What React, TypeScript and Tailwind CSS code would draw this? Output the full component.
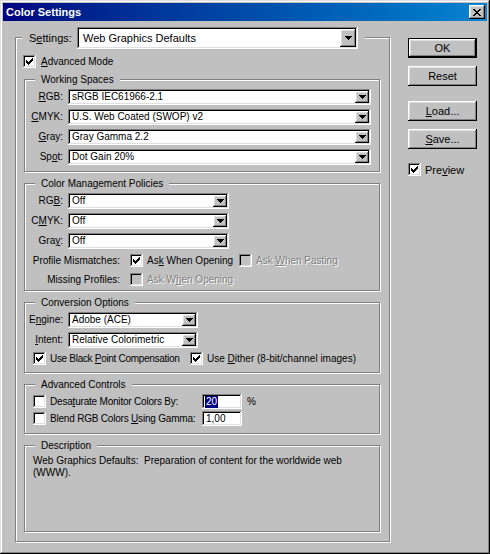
import type { ReactNode } from "react";

// classic 3D bevels
const raised =
  "shadow-[inset_-1px_-1px_#000,inset_1px_1px_#fff,inset_-2px_-2px_#808080,inset_2px_2px_#dfdfdf]";
const sunken =
  "shadow-[inset_-1px_-1px_#fff,inset_1px_1px_#808080,inset_-2px_-2px_#dfdfdf,inset_2px_2px_#000]";
const etched = "border border-[#808080] shadow-[inset_1px_1px_#fff,1px_1px_#fff]";
const dim = "text-[#808080] [text-shadow:1px_1px_0_#fff]";

function Tick() {
  return (
    <svg width="7" height="7" viewBox="0 0 7 7" shapeRendering="crispEdges">
      {[2, 3, 4, 3, 2, 1, 0].map((y, x) => (
        <rect key={x} x={x} y={y} width="1" height="3" fill="#000" />
      ))}
    </svg>
  );
}

function Arrow() {
  return (
    <svg width="7" height="4" viewBox="0 0 7 4" shapeRendering="crispEdges">
      <path d="M0 0h7v1H0zM1 1h5v1H1zM2 2h3v1H2zM3 3h1v1H3z" fill="#000" />
    </svg>
  );
}

function CloseGlyph() {
  return (
    <svg width="8" height="7" viewBox="0 0 8 7" shapeRendering="crispEdges">
      <path
        d="M0 0h2v1H0zM6 0h2v1H6zM1 1h2v1H1zM5 1h2v1H5zM2 2h4v1H2zM3 3h2v1H3zM2 4h4v1H2zM1 5h2v1H1zM5 5h2v1H5zM0 6h2v1H0zM6 6h2v1H6z"
        fill="#000"
      />
    </svg>
  );
}

function Check({ on, off }: { on?: boolean; off?: boolean }) {
  return (
    <span
      className={`flex h-[13px] w-[13px] shrink-0 items-center justify-center ${sunken} ${
        off ? "bg-[#c0c0c0]" : "bg-white"
      }`}
    >
      {on && <Tick />}
    </span>
  );
}

function Select({ value, className }: { value: string; className: string }) {
  return (
    <div className={`flex h-[16px] bg-white p-[2px] ${sunken} ${className}`}>
      <span className="flex-1 truncate pl-[2px] leading-[12px]">{value}</span>
      <span className={`flex w-[14px] items-center justify-center bg-[#c0c0c0] ${raised}`}>
        <Arrow />
      </span>
    </div>
  );
}

function Group({ title, className, children }: { title: string; className: string; children: ReactNode }) {
  return (
    <div className={`flex w-[356px] shrink-0 flex-col ${etched} ${className}`}>
      <div className="-mt-[6px] ml-[10px] w-fit bg-[#c0c0c0] px-[6px] leading-[12px]">{title}</div>
      {children}
    </div>
  );
}

function Btn({ children, main }: { children: ReactNode; main?: boolean }) {
  return (
    <div className={`h-[20px] w-[69px] ${main ? "border border-black" : ""}`}>
      <div className={`flex h-full w-full items-center justify-center bg-[#c0c0c0] ${raised}`}>{children}</div>
    </div>
  );
}

export default function App() {
  return (
    <div className="flex h-[554px] w-[490px] flex-col bg-[#c0c0c0] p-[3px] font-['Liberation_Sans',Arial,sans-serif] text-black shadow-[inset_-1px_-1px_#000,inset_1px_1px_#dfdfdf,inset_-2px_-2px_#808080,inset_2px_2px_#fff]">
      {/* title bar */}
      <div className="flex h-[18px] shrink-0 items-center justify-between bg-linear-to-r from-[#000080] to-[#1084d0] pl-[3px] pr-[2px]">
        <span className="text-[11px] font-bold leading-none text-white">Color Settings</span>
        <span className={`flex h-[14px] w-[16px] items-center justify-center bg-[#c0c0c0] ${raised}`}>
          <CloseGlyph />
        </span>
      </div>

      <div className="flex whitespace-nowrap pl-[12px] pt-[16px] text-[10px] leading-[12px]">
        {/* settings frame */}
        <div className={`flex h-[505px] w-[375px] shrink-0 flex-col pl-[8px] ${etched}`}>
          <div className="-mt-[11px] -ml-[2px] flex w-fit items-center bg-[#c0c0c0] px-[7px] text-[11px]">
            <span className="w-[44px]">
              S<span className="underline">e</span>ttings:
            </span>
            <div className={`ml-[4px] flex h-[22px] w-[281px] bg-white p-[2px] ${sunken}`}>
              <span className="flex flex-1 items-center pl-[4px]">Web Graphics Defaults</span>
              <span className={`flex w-[16px] items-center justify-center bg-[#c0c0c0] ${raised}`}>
                <Arrow />
              </span>
            </div>
          </div>

          <label className="mt-[6px] ml-[-1px] flex items-center gap-[5px]">
            <Check on />
            <span>
              <span className="underline">A</span>dvanced Mode
            </span>
          </label>

          <div className="mt-[11px] flex flex-col gap-[11px]">
            <Group title="Working Spaces" className="h-[93px]">
              <div className="mt-[3px] grid grid-cols-[38px_303px] items-center gap-x-[5px] gap-y-[4px]">
                <span className="text-right">
                  <span className="underline">R</span>GB:
                </span>
                <Select value="sRGB IEC61966-2.1" className="w-[303px]" />
                <span className="text-right">
                  <span className="underline">C</span>MYK:
                </span>
                <Select value="U.S. Web Coated (SWOP) v2" className="w-[303px]" />
                <span className="text-right">
                  <span className="underline">G</span>ray:
                </span>
                <Select value="Gray Gamma 2.2" className="w-[303px]" />
                <span className="text-right">
                  Sp<span className="underline">o</span>t:
                </span>
                <Select value="Dot Gain 20%" className="w-[303px]" />
              </div>
            </Group>

            <Group title="Color Management Policies" className="h-[108px]">
              <div className="mt-[3px] grid grid-cols-[38px_161px] items-center gap-x-[5px] gap-y-[4px]">
                <span className="text-right">
                  RG<span className="underline">B</span>:
                </span>
                <Select value="Off" className="w-[161px]" />
                <span className="text-right">
                  C<span className="underline">M</span>YK:
                </span>
                <Select value="Off" className="w-[161px]" />
                <span className="text-right">
                  Gra<span className="underline">y</span>:
                </span>
                <Select value="Off" className="w-[161px]" />
              </div>
              <div className="mt-[5px] flex h-[13px] items-center">
                <span className="w-[95px] text-right">Profile Mismatches:</span>
                <span className="ml-[10px]">
                  <Check on />
                </span>
                <span className="ml-[4px] w-[82px]">
                  As<span className="underline">k</span> When Opening
                </span>
                <span className="ml-[10px]">
                  <Check off />
                </span>
                <span className={`ml-[4px] ${dim}`}>
                  Ask <span className="underline">W</span>hen Pasting
                </span>
              </div>
              <div className="mt-[6px] flex h-[13px] items-center">
                <span className="w-[95px] text-right">Missing Profiles:</span>
                <span className="ml-[10px]">
                  <Check off />
                </span>
                <span className={`ml-[4px] ${dim}`}>
                  Ask W<span className="underline">h</span>en Opening
                </span>
              </div>
            </Group>

            <Group title="Conversion Options" className="h-[71px]">
              <div className="mt-[3px] grid grid-cols-[38px_130px] items-center gap-x-[5px] gap-y-[4px]">
                <span className="text-right">
                  E<span className="underline">n</span>gine:
                </span>
                <Select value="Adobe (ACE)" className="w-[130px]" />
                <span className="text-right">
                  <span className="underline">I</span>ntent:
                </span>
                <Select value="Relative Colorimetric" className="w-[130px]" />
              </div>
              <div className="mt-[4px] ml-[8px] flex h-[13px] items-center">
                <Check on />
                <span className="ml-[4px] w-[140px] tracking-[-0.3px]">
                  Use Black <span className="underline">P</span>oint Compensation
                </span>
                <Check on />
                <span className="ml-[4px]">
                  Use <span className="underline">D</span>ither (8-bit/channel images)
                </span>
              </div>
            </Group>

            <Group title="Advanced Controls" className="h-[50px]">
              <div className="mt-[3px] ml-[8px] flex h-[15px] items-center">
                <Check />
                <span className="ml-[4px] w-[148px] tracking-[-0.2px]">
                  Desa<span className="underline">t</span>urate Monitor Colors By:
                </span>
                <div className={`ml-[4px] flex h-[15px] w-[40px] items-center bg-white px-[3px] ${sunken}`}>
                  <span className="bg-[#000080] px-px text-white">20</span>
                </div>
                <span className="ml-[5px]">%</span>
              </div>
              <div className="mt-[2px] ml-[8px] flex h-[15px] items-center">
                <Check />
                <span className="ml-[4px] w-[148px] tracking-[-0.2px]">
                  Blend RGB Colors <span className="underline">U</span>sing Gamma:
                </span>
                <div className={`ml-[4px] flex h-[15px] w-[40px] items-center bg-white px-[4px] ${sunken}`}>
                  1,00
                </div>
              </div>
            </Group>

            <Group title="Description" className="h-[87px]">
              <p className="mt-[3px] ml-[8px] whitespace-pre">
                Web Graphics Defaults:  Preparation of content for the worldwide web
                <br />
                (WWW).
              </p>
            </Group>
          </div>
        </div>

        {/* buttons */}
        <div className="ml-[18px] mt-[1px] flex flex-col text-[11px]">
          <Btn main>OK</Btn>
          <div className="mt-[8px]">
            <Btn>Reset</Btn>
          </div>
          <div className="mt-[15px]">
            <Btn>
              <span className="underline">L</span>oad...
            </Btn>
          </div>
          <div className="mt-[8px]">
            <Btn>
              <span className="underline">S</span>ave...
            </Btn>
          </div>
          <label className="mt-[14px] flex items-center gap-[4px]">
            <Check on />
            <span>
              Pre<span className="underline">v</span>iew
            </span>
          </label>
        </div>
      </div>
    </div>
  );
}
